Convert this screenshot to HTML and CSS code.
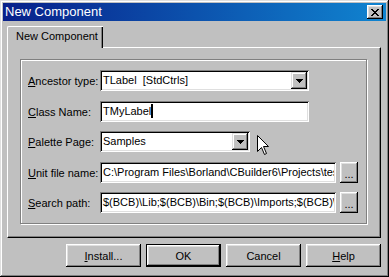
FILE: index.html
```html
<!DOCTYPE html>
<html>
<head>
<meta charset="utf-8">
<link rel="stylesheet" href="styles.css">
</head>
<body>
<div class="window">
  <div class="titlebar">
    <span class="title">New Component</span>
    <div class="close">
      <svg width="8" height="7" viewBox="0 0 8 7"><path d="M0 0h2v1H0zM6 0h2v1H6zM1 1h2v1H1zM5 1h2v1H5zM2 2h4v1H2zM3 3h2v1H3zM2 4h4v1H2zM1 5h2v1H1zM5 5h2v1H5zM0 6h2v1H0zM6 6h2v1H6z" fill="#000"/></svg>
    </div>
  </div>
  <div class="body">
    <div class="tabs"><div class="tab">New Component</div></div>
    <div class="panel">
      <div class="group">
        <div class="row">
          <span class="lbl"><u>A</u>ncestor type:</span>
          <div class="sunken combo w-anc">
            <span class="val">TLabel&nbsp; [StdCtrls]</span>
            <span class="dd"><svg width="7" height="4" viewBox="0 0 7 4"><path d="M0 0h7v1H0zM1 1h5v1H1zM2 2h3v1H2zM3 3h1v1H3z" fill="#000"/></svg></span>
          </div>
        </div>
        <div class="row g10">
          <span class="lbl"><u>C</u>lass Name:</span>
          <div class="sunken w-anc"><span class="val">TMyLabel<span class="caret"></span></span></div>
        </div>
        <div class="row g9">
          <span class="lbl"><u>P</u>alette Page:</span>
          <div class="sunken combo w-pal">
            <span class="val">Samples</span>
            <span class="dd"><svg width="7" height="4" viewBox="0 0 7 4"><path d="M0 0h7v1H0zM1 1h5v1H1zM2 2h3v1H2zM3 3h1v1H3z" fill="#000"/></svg></span>
          </div>
        </div>
        <div class="row g10">
          <span class="lbl"><u>U</u>nit file name:</span>
          <div class="sunken w-path"><span class="val">C:\Program Files\Borland\CBuilder6\Projects\tes</span></div>
          <div class="raised small">...</div>
        </div>
        <div class="row g9">
          <span class="lbl"><u>S</u>earch path:</span>
          <div class="sunken w-path"><span class="val">$(BCB)\Lib;$(BCB)\Bin;$(BCB)\Imports;$(BCB)\F</span></div>
          <div class="raised small">...</div>
        </div>
      </div>
    </div>
    <div class="buttons">
      <div class="raised btn"><span><u>I</u>nstall...</span></div>
      <div class="raised btn default"><span>OK</span></div>
      <div class="raised btn"><span>Cancel</span></div>
      <div class="raised btn"><span><u>H</u>elp</span></div>
    </div>
  </div>
  <svg class="cursor" width="13" height="21" viewBox="0 0 13 21"><path d="M0.5 0.5V16.5L4.5 12.5L7.5 19.5L9.5 18.5L6.5 11.5H11.5Z" fill="#fff" stroke="#000" stroke-width="1" stroke-linejoin="miter"/></svg>
</div>
</body>
</html>
```
FILE: styles.css
```css
html, body {
  margin: 0;
  padding: 0;
}
body {
  width: 389px;
  height: 277px;
  overflow: hidden;
  background: #c0c0c0;
  font-family: "Liberation Sans", Arial, sans-serif;
  font-size: 11px;
  color: #000;
}
.window {
  position: relative;
  box-sizing: border-box;
  width: 389px;
  height: 277px;
  padding: 3px;
  background: #c0c0c0;
  box-shadow: inset -1px -1px #000, inset 1px 1px #dfdfdf, inset -2px -2px #808080, inset 2px 2px #fff;
}
.titlebar {
  height: 18px;
  display: flex;
  align-items: center;
  justify-content: space-between;
  padding: 0 3px 0 2px;
  background: linear-gradient(to right, #08208a, #1084d0);
}
.title {
  color: #fff;
  font-size: 13px;
  line-height: 18px;
}
.close {
  box-sizing: border-box;
  width: 16px;
  height: 14px;
  display: flex;
  align-items: center;
  justify-content: center;
  background: #c0c0c0;
  box-shadow: inset -1px -1px #000, inset 1px 1px #fff, inset -2px -2px #808080, inset 2px 2px #dfdfdf;
}
.body {
  padding: 5px 5px 0 4px;
}
.tabs {
  display: flex;
  height: 21px;
}
.tab {
  position: relative;
  z-index: 1;
  box-sizing: border-box;
  width: 96px;
  height: 22px;
  padding: 3px 0 0 8px;
  line-height: 13px;
  background: #c0c0c0;
  border-top: 1px solid #fff;
  border-left: 1px solid #fff;
  border-top-left-radius: 2px;
  box-shadow: inset -1px 0 #000, inset -2px 0 #808080;
}
.panel {
  box-sizing: border-box;
  height: 191px;
  padding: 11px 0 0 12px;
  border-top: 1px solid #fff;
  border-left: 1px solid #fff;
  border-right: 1px solid #000;
  border-bottom: 1px solid #000;
  box-shadow: inset -1px -1px #808080;
}
.group {
  box-sizing: border-box;
  width: 347px;
  height: 165px;
  padding: 10px 0 0 7px;
  border: 1px solid #808080;
  box-shadow: inset 1px 1px #fff, 1px 1px #fff;
}
.row {
  display: flex;
  align-items: center;
  height: 21px;
}
.g10 { margin-top: 10px; }
.g9 { margin-top: 9px; }
.lbl {
  width: 72px;
  flex: none;
  white-space: nowrap;
}
.sunken {
  box-sizing: border-box;
  height: 21px;
  padding: 2px;
  display: flex;
  background: #fff;
  box-shadow: inset 1px 1px #808080, inset -1px -1px #fff, inset 2px 2px #000, inset -2px -2px #dfdfdf;
  overflow: hidden;
}
.w-anc { width: 209px; }
.w-pal { width: 150px; }
.w-path { width: 236px; }
.val {
  flex: 1;
  min-width: 0;
  padding-left: 1px;
  line-height: 17px;
  white-space: nowrap;
  overflow: hidden;
}
.caret {
  display: inline-block;
  width: 2px;
  height: 14px;
  background: #000;
  vertical-align: -3px;
}
.dd {
  flex: none;
  width: 16px;
  height: 17px;
  display: flex;
  align-items: center;
  justify-content: center;
  background: #c0c0c0;
  box-shadow: inset -1px -1px #000, inset 1px 1px #dfdfdf, inset -2px -2px #808080, inset 2px 2px #fff;
}
.raised {
  box-sizing: border-box;
  display: flex;
  align-items: center;
  justify-content: center;
  background: #c0c0c0;
  box-shadow: inset -1px -1px #000, inset 1px 1px #fff, inset -2px -2px #808080, inset 2px 2px #dfdfdf;
}
.small {
  flex: none;
  width: 18px;
  height: 21px;
  margin-left: 4px;
  padding-top: 2px;
}
.buttons {
  display: flex;
  justify-content: flex-end;
  gap: 5px;
  margin-top: 6px;
}
.btn {
  width: 75px;
  height: 23px;
}
.btn.default {
  border: 1px solid #000;
}
.cursor {
  position: absolute;
  left: 257px;
  top: 135px;
}
```
